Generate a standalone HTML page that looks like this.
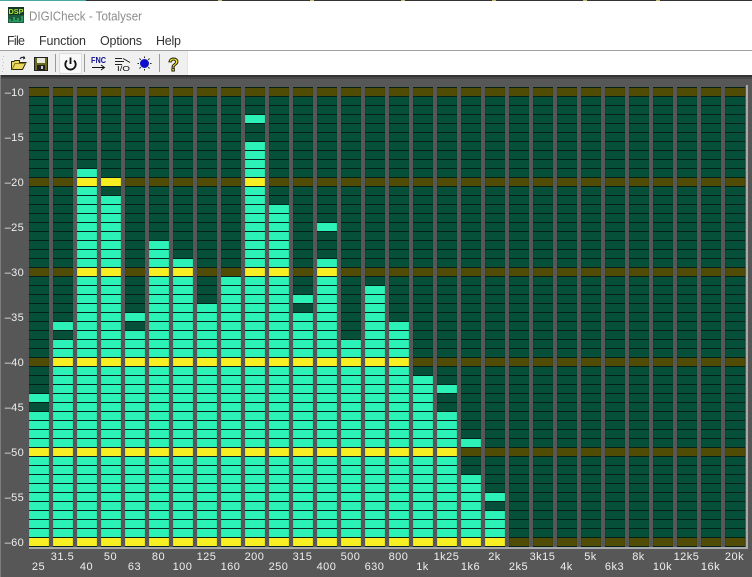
<!DOCTYPE html>
<html lang="en">
<head>
<meta charset="utf-8">
<title>DIGICheck - Totalyser</title>
<style>
html,body{margin:0;padding:0;width:752px;height:577px;overflow:hidden;background:#575757}
svg{display:block}
text{font-family:"Liberation Sans",sans-serif}
.m{font-size:12.500px;fill:#333}
.y{font-size:11px;fill:#eee;text-anchor:end;letter-spacing:.3px}
.x{font-size:11px;fill:#eee;text-anchor:middle;letter-spacing:.5px}
.c{shape-rendering:crispEdges}
</style>
</head>
<body>
<svg width="752" height="577" viewBox="0 0 752 577" xmlns="http://www.w3.org/2000/svg">

<!-- title bar -->
<rect width="752" height="51" fill="#fff"/>
<rect width="752" height="1" fill="#333"/>
<rect width="86" height="1" fill="#45a8a4"/>
<rect x="218" width="4" height="1" fill="#c8c070"/><rect x="310" width="4" height="1" fill="#c8c070"/><rect x="401" width="4" height="1" fill="#c8c070"/><rect x="492" width="4" height="1" fill="#c8c070"/><rect x="583" width="4" height="1" fill="#c8c070"/><rect x="656" width="4" height="1" fill="#c8c070"/>
<rect x="8" y="7" width="16" height="16" fill="#1b5a3a"/>
<rect x="8" y="7" width="16" height="8" fill="#123a22"/>
<text x="8.500" y="14" font-size="7" font-weight="bold" fill="#b6e83a" textLength="15" lengthAdjust="spacingAndGlyphs">DSP</text>
<path d="M9 22V19H11V21H13V17H15V20H17V18H19V21H21V16H23V22Z" fill="#2a9a60"/>
<text x="29" y="20.500" font-size="13" fill="#8c8c8c" textLength="113" lengthAdjust="spacingAndGlyphs">DIGICheck - Totalyser</text>

<!-- menu -->
<text class="m" x="7" y="45" textLength="18">File</text>
<text class="m" x="39" y="45" textLength="47">Function</text>
<text class="m" x="100" y="45" textLength="42">Options</text>
<text class="m" x="156" y="45" textLength="25">Help</text>

<!-- toolbar -->
<rect y="50" width="752" height="1" fill="#a0a0a0"/>
<rect y="51" width="752" height="24" fill="#fff"/>
<rect y="51" width="187" height="24" fill="#f0f0f0"/>
<path d="M3 56h1M2 59h1M3 62h1M2 65h1M3 68h1M2 71h1" stroke="#c4c4c4" fill="none" transform="translate(0 .5)"/>
<!-- open -->
<path d="M11.500 69.500V61.500H14L15 60.500H19.500V62.500H26L22.500 69.500Z" fill="#e8d860" stroke="#2a2a10"/>
<path d="M12 69.500L15 63.500H26" fill="none" stroke="#8a7a20"/>
<path d="M20 59C21 57 23 57 25 58M25 58L23.500 56.500M25 58L23 59" fill="none" stroke="#222"/>
<!-- save -->
<rect x="34.500" y="57.500" width="13" height="13" fill="#6a6a20" stroke="#222"/>
<rect x="37" y="58" width="8" height="5" fill="#e8e8d8"/>
<rect x="37" y="65" width="8" height="5" fill="#222"/>
<rect x="41" y="66" width="2" height="3" fill="#ccc"/>
<rect x="55" y="54" width="1" height="18" fill="#999"/>
<!-- power button -->
<rect x="59.500" y="53.500" width="22" height="20" fill="#f9f9f9" stroke="#dcdcdc"/>
<path d="M67 60.500A5.200 5.200 0 1 0 74 60.500" fill="none" stroke="#111" stroke-width="1.800"/>
<path d="M70.500 57.500V64" stroke="#111" stroke-width="1.800"/>
<rect x="84" y="54" width="1" height="18" fill="#999"/>
<!-- FNC -->
<text x="91" y="63" font-size="8" font-weight="bold" fill="#101090" textLength="15" lengthAdjust="spacingAndGlyphs">FNC</text>
<path d="M92 67.500H104M101 65L104.500 67.500L101 70" fill="none" stroke="#111"/>
<!-- I/O -->
<path d="M115 58.500H122M115 61.500H124M115 64.500H122M123 58.500L130 62.500" fill="none" stroke="#222"/>
<text x="117" y="71" font-size="7" fill="#111" textLength="13" lengthAdjust="spacingAndGlyphs">I/O</text>
<!-- led -->
<circle cx="144.500" cy="63.500" r="4.500" fill="#1010c8"/>
<path d="M144.500 56.500V58M144.500 69V70.500M137.500 63.500H139M150 63.500H151.500M139.500 58.500L140.800 59.800M149.500 58.500L148.200 59.800M139.500 68.500L140.800 67.200M149.500 68.500L148.200 67.200" stroke="#222" fill="none"/>
<rect x="159" y="54" width="1" height="18" fill="#999"/>
<!-- help -->
<text x="173.500" y="71" font-size="18" font-weight="bold" text-anchor="middle" fill="#f2e23a" stroke="#1a1a00" stroke-width=".9">?</text>
<rect x="187" y="51" width="1" height="24" fill="#e4e4e4"/>

<!-- plot background -->
<rect y="75" width="752" height="502" fill="#575757"/>
<rect y="75" width="752" height="2" fill="#333"/>
<rect y="77" width="752" height="2" fill="#484848"/>
<rect y="75" width="1" height="502" fill="#7d7d7d"/>
<rect x="746" y="85" width="2" height="464" fill="#a8a8a8"/>
<rect x="29" y="547" width="719" height="2" fill="#a8a8a8"/>

<g class="c">
<!-- dark cells -->
<path d="M29 317H745" stroke="#064f39" stroke-width="460" stroke-dasharray="20 4" fill="none"/>
<!-- olive rows -->
<path d="M29 91.500H745M29 181.500H745M29 271.500H745M29 361.500H745M29 451.500H745M29 541.500H745" stroke="#504c06" stroke-width="9" stroke-dasharray="20 4" fill="none"/>

<!-- lit cells -->
<g fill="#2df2b8">
<rect x="29" y="393" width="20" height="9"/><rect x="29" y="411" width="20" height="136"/>
<rect x="53" y="321" width="20" height="9"/><rect x="53" y="339" width="20" height="208"/>
<rect x="77" y="168" width="20" height="379"/>
<rect x="101" y="177" width="20" height="9"/><rect x="101" y="195" width="20" height="352"/>
<rect x="125" y="312" width="20" height="9"/><rect x="125" y="330" width="20" height="217"/>
<rect x="149" y="240" width="20" height="307"/>
<rect x="173" y="258" width="20" height="289"/>
<rect x="197" y="303" width="20" height="244"/>
<rect x="221" y="276" width="20" height="271"/>
<rect x="245" y="114" width="20" height="9"/><rect x="245" y="141" width="20" height="406"/>
<rect x="269" y="204" width="20" height="343"/>
<rect x="293" y="294" width="20" height="9"/><rect x="293" y="312" width="20" height="235"/>
<rect x="317" y="222" width="20" height="9"/><rect x="317" y="258" width="20" height="289"/>
<rect x="341" y="339" width="20" height="208"/>
<rect x="365" y="285" width="20" height="262"/>
<rect x="389" y="321" width="20" height="226"/>
<rect x="413" y="375" width="20" height="172"/>
<rect x="437" y="384" width="20" height="9"/><rect x="437" y="411" width="20" height="136"/>
<rect x="461" y="438" width="20" height="9"/><rect x="461" y="474" width="20" height="73"/>
<rect x="485" y="492" width="20" height="9"/><rect x="485" y="510" width="20" height="37"/>
</g>

<!-- lit yellow rows -->
<g fill="#f7ef21">
<rect x="77" y="177" width="20" height="9"/><rect x="101" y="177" width="20" height="9"/><rect x="245" y="177" width="20" height="9"/>
<rect x="77" y="267" width="20" height="9"/><rect x="101" y="267" width="20" height="9"/><rect x="149" y="267" width="20" height="9"/><rect x="173" y="267" width="20" height="9"/><rect x="245" y="267" width="20" height="9"/><rect x="269" y="267" width="20" height="9"/><rect x="317" y="267" width="20" height="9"/>
</g>
<g fill="none" stroke="#f7ef21" stroke-width="9" stroke-dasharray="20 4">
<path d="M53 361.500H409"/>
<path d="M29 451.500H457"/>
<path d="M29 541.500H505"/>
</g>

<!-- separator lines -->
<path fill="none" stroke="#03211a" stroke-width="1" stroke-dasharray="20 4" d="M29 87.500H745M29 96.500H745M29 105.500H745M29 114.500H745M29 123.500H745M29 132.500H745M29 141.500H745M29 150.500H745M29 159.500H745M29 168.500H745M29 177.500H745M29 186.500H745M29 195.500H745M29 204.500H745M29 213.500H745M29 222.500H745M29 231.500H745M29 240.500H745M29 249.500H745M29 258.500H745M29 267.500H745M29 276.500H745M29 285.500H745M29 294.500H745M29 303.500H745M29 312.500H745M29 321.500H745M29 330.500H745M29 339.500H745M29 348.500H745M29 357.500H745M29 366.500H745M29 375.500H745M29 384.500H745M29 393.500H745M29 402.500H745M29 411.500H745M29 420.500H745M29 429.500H745M29 438.500H745M29 447.500H745M29 456.500H745M29 465.500H745M29 474.500H745M29 483.500H745M29 492.500H745M29 501.500H745M29 510.500H745M29 519.500H745M29 528.500H745M29 537.500H745M29 546.500H745"/>

<!-- soft column edges -->
<path d="M29 317H745" stroke="#000" stroke-opacity=".06" stroke-width="460" stroke-dasharray="1 18 1 4" fill="none"/>
</g>

<!-- y axis -->
<text class="y" x="24" y="96">–10</text>
<text class="y" x="24" y="141">–15</text>
<text class="y" x="24" y="186">–20</text>
<text class="y" x="24" y="231">–25</text>
<text class="y" x="24" y="276">–30</text>
<text class="y" x="24" y="321">–35</text>
<text class="y" x="24" y="366">–40</text>
<text class="y" x="24" y="411">–45</text>
<text class="y" x="24" y="456">–50</text>
<text class="y" x="24" y="501">–55</text>
<text class="y" x="24" y="546">–60</text>

<!-- x axis -->
<text class="x" x="38.500" y="570">25</text>
<text class="x" x="62.500" y="560">31.5</text>
<text class="x" x="86.500" y="570">40</text>
<text class="x" x="110.500" y="560">50</text>
<text class="x" x="134.500" y="570">63</text>
<text class="x" x="158.500" y="560">80</text>
<text class="x" x="182.500" y="570">100</text>
<text class="x" x="206.500" y="560">125</text>
<text class="x" x="230.500" y="570">160</text>
<text class="x" x="254.500" y="560">200</text>
<text class="x" x="278.500" y="570">250</text>
<text class="x" x="302.500" y="560">315</text>
<text class="x" x="326.500" y="570">400</text>
<text class="x" x="350.500" y="560">500</text>
<text class="x" x="374.500" y="570">630</text>
<text class="x" x="398.500" y="560">800</text>
<text class="x" x="422.500" y="570">1k</text>
<text class="x" x="446.500" y="560">1k25</text>
<text class="x" x="470.500" y="570">1k6</text>
<text class="x" x="494.500" y="560">2k</text>
<text class="x" x="518.500" y="570">2k5</text>
<text class="x" x="542.500" y="560">3k15</text>
<text class="x" x="566.500" y="570">4k</text>
<text class="x" x="590.500" y="560">5k</text>
<text class="x" x="614.500" y="570">6k3</text>
<text class="x" x="638.500" y="560">8k</text>
<text class="x" x="662.500" y="570">10k</text>
<text class="x" x="686.500" y="560">12k5</text>
<text class="x" x="710.500" y="570">16k</text>
<text class="x" x="734.500" y="560">20k</text>
</svg>
</body>
</html>
